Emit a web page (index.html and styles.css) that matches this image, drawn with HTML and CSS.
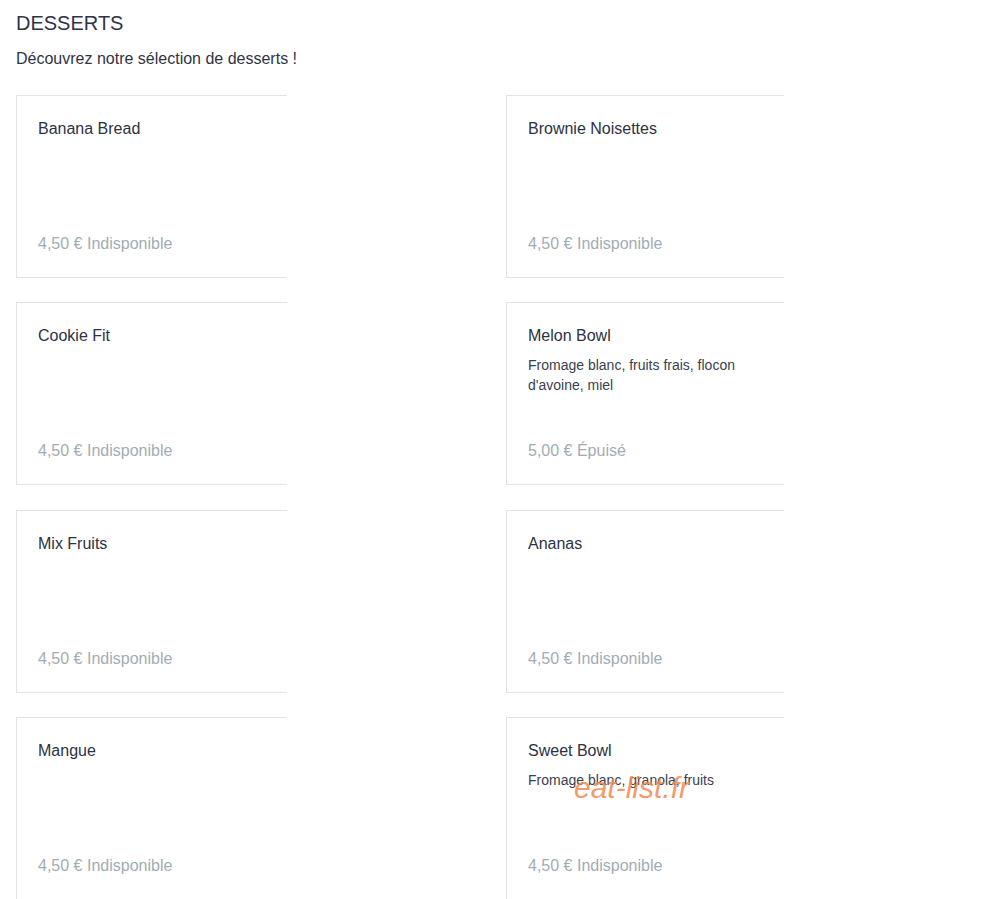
FILE: index.html
```html
<!DOCTYPE html>
<html lang="fr">
<head>
<meta charset="utf-8">
<title>Desserts</title>
<link rel="stylesheet" href="styles.css">
</head>
<body>
<main class="page">
  <h1 class="title">DESSERTS</h1>
  <p class="subtitle">Découvrez notre sélection de desserts !</p>
  <section class="grid">
    <article class="card">
      <h2 class="name">Banana Bread</h2>
      <p class="price">4,50 € Indisponible</p>
    </article>
    <article class="card">
      <h2 class="name">Brownie Noisettes</h2>
      <p class="price">4,50 € Indisponible</p>
    </article>
    <article class="card">
      <h2 class="name">Cookie Fit</h2>
      <p class="price">4,50 € Indisponible</p>
    </article>
    <article class="card">
      <h2 class="name">Melon Bowl</h2>
      <p class="desc">Fromage blanc, fruits frais, flocon d'avoine, miel</p>
      <p class="price">5,00 € Épuisé</p>
    </article>
    <article class="card">
      <h2 class="name">Mix Fruits</h2>
      <p class="price">4,50 € Indisponible</p>
    </article>
    <article class="card">
      <h2 class="name">Ananas</h2>
      <p class="price">4,50 € Indisponible</p>
    </article>
    <article class="card">
      <h2 class="name">Mangue</h2>
      <p class="price">4,50 € Indisponible</p>
    </article>
    <article class="card">
      <h2 class="name">Sweet Bowl</h2>
      <p class="desc">Fromage blanc, granola, fruits</p>
      <p class="price">4,50 € Indisponible</p>
      <span class="watermark">eat-list.fr</span>
    </article>
  </section>
</main>
</body>
</html>
```

FILE: styles.css
```css
html, body {
  margin: 0;
  padding: 0;
  background: #ffffff;
}

body {
  font-family: "Liberation Sans", Arial, sans-serif;
  color: #2d3243;
}

.page {
  padding: 11px 0 0 16px;
}

.title {
  margin: 0;
  font-size: 20px;
  line-height: 24px;
  font-weight: normal;
  color: #2f3445;
}

.subtitle {
  margin: 12px 0 0 0;
  font-size: 16px;
  line-height: 24px;
  color: #2f3445;
}

.grid {
  margin-top: 24px;
  display: grid;
  grid-template-columns: 490px 490px;
  grid-auto-rows: 183px;
  row-gap: 24.34px;
}

.card {
  position: relative;
  box-sizing: border-box;
  height: 183px;
  width: 271px;
  padding: 21px 0 21px 21px;
  border-top: 1px solid #e3e3e3;
  border-bottom: 1px solid #e3e3e3;
  border-left: 1px solid #e3e3e3;
  display: flex;
  flex-direction: column;
}

.card:nth-child(2n) {
  width: 278px;
}

.name {
  margin: 0;
  font-size: 16px;
  line-height: 24px;
  font-weight: normal;
  color: #2d3243;
}

.desc {
  margin: 7px 0 0 0;
  width: 230px;
  font-size: 14px;
  line-height: 20px;
  color: #3a3f4f;
}

.price {
  margin: auto 0 0 0;
  font-size: 16px;
  line-height: 24px;
  color: #a2acb4;
}

.watermark {
  position: absolute;
  top: 55px;
  left: 67px;
  font-size: 30px;
  line-height: 30px;
  font-style: italic;
  color: #f3894f;
  opacity: 0.85;
}
```
